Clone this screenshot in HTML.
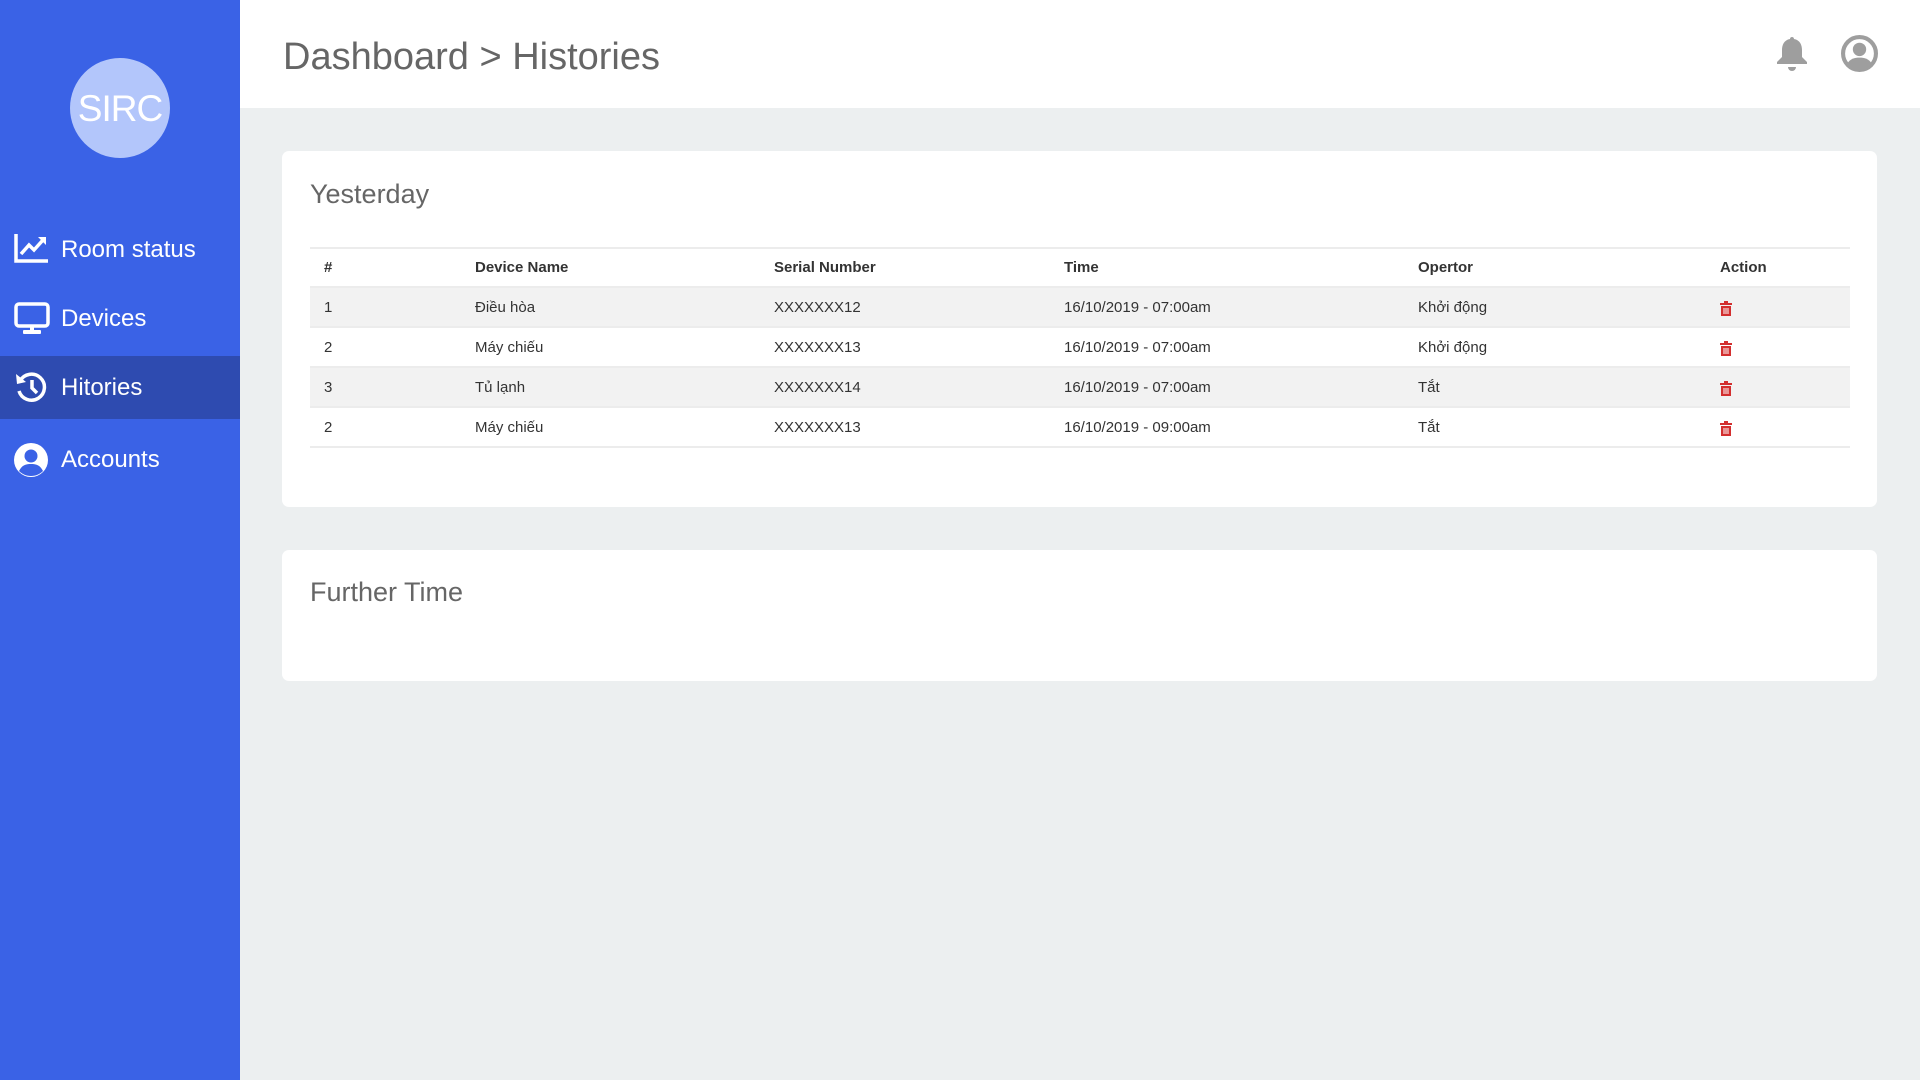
<!DOCTYPE html>
<html><head><meta charset="utf-8">
<style>
*{margin:0;padding:0;box-sizing:border-box}
body{width:1920px;height:1080px;background:#eceff0;font-family:"Liberation Sans",sans-serif;position:relative;overflow:hidden}
.side{position:absolute;left:0;top:0;width:240px;height:1080px;background:#3a62e6}
.logo{position:absolute;left:70px;top:58px;width:100px;height:100px;border-radius:50%;background:#b3c6fb;color:#fff;font-size:37px;text-align:center;line-height:102px;letter-spacing:-1px}
.item{position:absolute;left:0;width:240px;height:63px;color:#fff;font-size:24px;line-height:63px;padding-left:61px}
.item svg{position:absolute;left:14px;top:15px}
.item.active{background:#2e4bb0}
.head{position:absolute;left:240px;top:0;width:1680px;height:108px;background:#fff}
.title{position:absolute;left:43px;top:36px;font-size:38px;color:#666}
.card{position:absolute;left:282px;width:1595px;background:#fff;border-radius:7px}
.card h2{position:absolute;left:28px;font-weight:normal;font-size:27px;color:#666}
table{position:absolute;left:28px;top:96px;width:1540px;border-collapse:collapse;font-size:15px;color:#333;table-layout:fixed}
th,td{text-align:left;padding:0 14px;height:40px;border-top:2px solid #ececec}
th{height:39px;font-weight:bold}
td svg{vertical-align:middle;margin-top:2px}
tr.s td{background:#f2f2f2}
tbody tr:last-child td{border-bottom:2px solid #ececec}
</style></head><body>
<div class="side">
<div class="logo">SIRC</div>
<div class="item" style="top:218px"><svg width="35" height="30" viewBox="0 0 35 30"><path d="M2 1v27h32" fill="none" stroke="#fff" stroke-width="3.5"/><path d="M7 21l8-9 5 5 9-10" fill="none" stroke="#fff" stroke-width="3.5"/><path d="M24 4h8v8z" fill="#fff"/></svg>Room status</div>
<div class="item" style="top:287px"><svg width="36" height="34" viewBox="0 0 36 34"><rect x="2" y="2" width="32" height="22" rx="3" fill="none" stroke="#fff" stroke-width="3.5"/><rect x="16" y="24" width="4" height="5" fill="#fff"/><rect x="9" y="28" width="18" height="4" rx="1" fill="#fff"/></svg>Devices</div>
<div class="item active" style="top:356px"><svg width="36" height="34" viewBox="0 0 36 34"><path d="M6 10a13 13 0 1 1-1 10" fill="none" stroke="#fff" stroke-width="3.5"/><path d="M2 3l1 10 9-2z" fill="#fff"/><path d="M18 9v8l5 5" fill="none" stroke="#fff" stroke-width="3.5"/></svg>Hitories</div>
<div class="item" style="top:428px"><svg width="36" height="36" viewBox="0 0 36 36"><circle cx="17" cy="17" r="17" fill="#fff"/><circle cx="17" cy="13" r="6.5" fill="#3a62e6"/><path d="M5 28c3-6 7-7 12-7s9 1 12 7c-3 3-7 5-12 5s-9-2-12-5z" fill="#3a62e6"/></svg>Accounts</div>
</div>
<div class="head">
<div class="title">Dashboard &gt; Histories</div>
<svg style="position:absolute;left:1535px;top:35px" width="34" height="38" viewBox="0 0 34 38"><path d="M17 2c2 0 2 2 2 2 6 1 8 6 8 11v7l5 5v2H2v-2l5-5v-7c0-5 2-10 8-11 0 0 0-2 2-2z" fill="#9e9e9e"/><path d="M13 32h8a4 4 0 0 1-8 0z" fill="#9e9e9e"/></svg>
<svg style="position:absolute;left:1601px;top:35px" width="37" height="37" viewBox="0 0 36 36"><circle cx="18" cy="18" r="16" fill="none" stroke="#9e9e9e" stroke-width="4"/><circle cx="18" cy="14" r="6.5" fill="#9e9e9e"/><path d="M6 28c3-5 7-6 12-6s9 1 12 6c-3 3-7 5-12 5s-9-2-12-5z" fill="#9e9e9e"/></svg>
</div>
<div class="card" style="top:151px;height:356px">
<h2 style="top:28px">Yesterday</h2>
<table>
<colgroup><col style="width:151px"><col style="width:299px"><col style="width:290px"><col style="width:354px"><col style="width:302px"><col></colgroup>
<thead><tr><th>#</th><th>Device Name</th><th>Serial Number</th><th>Time</th><th>Opertor</th><th>Action</th></tr></thead>
<tbody>
<tr class="s"><td>1</td><td>Điều hòa</td><td>XXXXXXX12</td><td>16/10/2019 - 07:00am</td><td>Khởi động</td><td><svg width="12" height="15" viewBox="0 0 12 15"><rect x="0" y="2" width="12" height="2" fill="#d32f2f"/><rect x="4" y="0" width="4" height="2" fill="#d32f2f"/><path d="M1 5h10v10H1z" fill="#d32f2f"/><path d="M4 7v6M6 7v6M8 7v6" stroke="#fff" stroke-width="1"/></svg></td></tr>
<tr><td>2</td><td>Máy chiếu</td><td>XXXXXXX13</td><td>16/10/2019 - 07:00am</td><td>Khởi động</td><td><svg width="12" height="15" viewBox="0 0 12 15"><rect x="0" y="2" width="12" height="2" fill="#d32f2f"/><rect x="4" y="0" width="4" height="2" fill="#d32f2f"/><path d="M1 5h10v10H1z" fill="#d32f2f"/><path d="M4 7v6M6 7v6M8 7v6" stroke="#fff" stroke-width="1"/></svg></td></tr>
<tr class="s"><td>3</td><td>Tủ lạnh</td><td>XXXXXXX14</td><td>16/10/2019 - 07:00am</td><td>Tắt</td><td><svg width="12" height="15" viewBox="0 0 12 15"><rect x="0" y="2" width="12" height="2" fill="#d32f2f"/><rect x="4" y="0" width="4" height="2" fill="#d32f2f"/><path d="M1 5h10v10H1z" fill="#d32f2f"/><path d="M4 7v6M6 7v6M8 7v6" stroke="#fff" stroke-width="1"/></svg></td></tr>
<tr><td>2</td><td>Máy chiếu</td><td>XXXXXXX13</td><td>16/10/2019 - 09:00am</td><td>Tắt</td><td><svg width="12" height="15" viewBox="0 0 12 15"><rect x="0" y="2" width="12" height="2" fill="#d32f2f"/><rect x="4" y="0" width="4" height="2" fill="#d32f2f"/><path d="M1 5h10v10H1z" fill="#d32f2f"/><path d="M4 7v6M6 7v6M8 7v6" stroke="#fff" stroke-width="1"/></svg></td></tr>
</tbody></table>
</div>
<div class="card" style="top:550px;height:131px">
<h2 style="top:27px">Further Time</h2>
</div>
</body></html>
